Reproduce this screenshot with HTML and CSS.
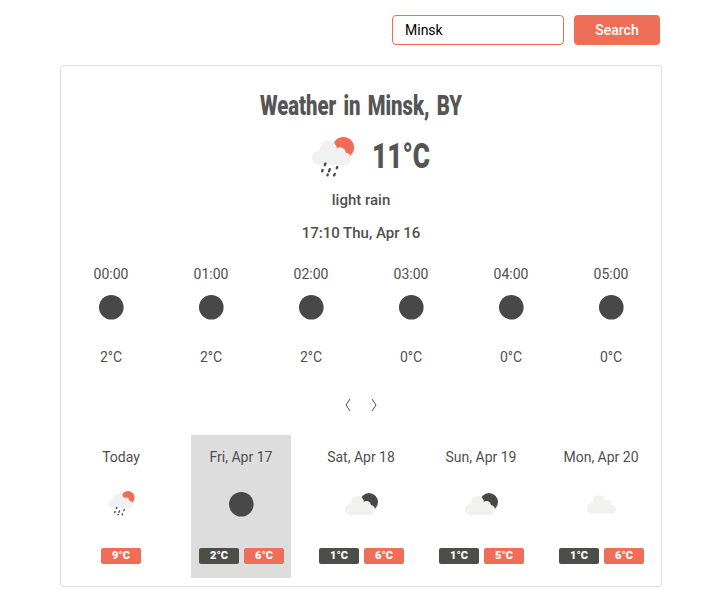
FILE: index.html
```
<!DOCTYPE html>
<html lang="en">
<head>
<meta charset="utf-8">
<title>Weather</title>
<link rel="stylesheet" href="styles.css">
</head>
<body>
<svg class="defs" aria-hidden="true">
  <symbol id="rain" viewBox="0 0 50 50">
    <circle cx="35.4" cy="15.6" r="10.7" fill="#f06d54"/>
    <g fill="#f1f1f1"><circle cx="20.3" cy="17.3" r="8.6"/><circle cx="11" cy="25.7" r="7"/><circle cx="32" cy="21" r="5.8"/><circle cx="37" cy="26.6" r="6.1"/><path d="M11 18h20l6 5v9.7H11z"/></g>
    <path d="M17.4 31.5l-.6 1.6M14.6 38l-.5 1.4M21.8 37.1l-.8 2.2M29.3 35l-.6 1.3M19.8 42.5l-.3.8M26.8 41.9l-.7 1.6" stroke="#484849" stroke-width="2.3" stroke-linecap="round"/>
  </symbol>
  <symbol id="night" viewBox="0 0 40 40"><circle cx="20.3" cy="20.3" r="12.3" fill="#484849"/></symbol>
  <symbol id="cloud-night" viewBox="0 0 40 40">
    <circle cx="28" cy="18.1" r="9" fill="#484849"/>
    <g fill="#f1f1f0"><circle cx="16.5" cy="18.4" r="6.4"/><circle cx="9.5" cy="25.4" r="5.6"/><circle cx="25.5" cy="21.3" r="4.4"/><circle cx="29.2" cy="26" r="5"/><path d="M9.5 20h17l2.7 3v8H9.5z"/></g>
  </symbol>
  <symbol id="cloud" viewBox="0 0 40 40">
    <g fill="#f1f1f0"><circle cx="17.8" cy="17" r="6.1"/><circle cx="10.9" cy="24.2" r="5.2"/><circle cx="26.7" cy="19.7" r="3.9"/><circle cx="30.9" cy="25.2" r="4.2"/><path d="M11 19h16l4 3v7.4H11z"/></g>
  </symbol>
</svg>
<main class="app">
  <form class="search">
    <input class="search-input" type="text" value="Minsk" aria-label="City">
    <button class="search-button" type="button">Search</button>
  </form>
  <section class="card">
    <h1 class="title"><svg width="220" height="36"><text x="9" y="27" textLength="202" lengthAdjust="spacingAndGlyphs">Weather in Minsk, BY</text></svg></h1>
    <div class="current">
      <svg class="current-icon"><use href="#rain"/></svg>
      <svg class="current-temp" width="64" height="46"><text x="-1" y="31" textLength="58" lengthAdjust="spacingAndGlyphs">11°C</text></svg>
    </div>
    <p class="summary">light rain</p>
    <p class="summary">17:10 Thu, Apr 16</p>
    <div class="hours">
      <div class="hour"><span>00:00</span><svg class="icon"><use href="#night"/></svg><span>2°C</span></div>
      <div class="hour"><span>01:00</span><svg class="icon"><use href="#night"/></svg><span>2°C</span></div>
      <div class="hour"><span>02:00</span><svg class="icon"><use href="#night"/></svg><span>2°C</span></div>
      <div class="hour"><span>03:00</span><svg class="icon"><use href="#night"/></svg><span>0°C</span></div>
      <div class="hour"><span>04:00</span><svg class="icon"><use href="#night"/></svg><span>0°C</span></div>
      <div class="hour"><span>05:00</span><svg class="icon"><use href="#night"/></svg><span>0°C</span></div>
    </div>
    <nav class="pager">
      <svg class="arrow" viewBox="0 0 6 14"><path d="M5 1L1 7l4 6"/></svg>
      <svg class="arrow" viewBox="0 0 6 14"><path d="M1 1l4 6-4 6"/></svg>
    </nav>
    <div class="days">
      <div class="day"><span>Today</span><svg class="icon icon-rain"><use href="#rain"/></svg><div class="temps"><b class="temp high">9°C</b></div></div>
      <div class="day selected"><span>Fri, Apr 17</span><svg class="icon"><use href="#night"/></svg><div class="temps"><b class="temp low">2°C</b><b class="temp high">6°C</b></div></div>
      <div class="day"><span>Sat, Apr 18</span><svg class="icon"><use href="#cloud-night"/></svg><div class="temps"><b class="temp low">1°C</b><b class="temp high">6°C</b></div></div>
      <div class="day"><span>Sun, Apr 19</span><svg class="icon"><use href="#cloud-night"/></svg><div class="temps"><b class="temp low">1°C</b><b class="temp high">5°C</b></div></div>
      <div class="day"><span>Mon, Apr 20</span><svg class="icon"><use href="#cloud"/></svg><div class="temps"><b class="temp low">1°C</b><b class="temp high">6°C</b></div></div>
    </div>
  </section>
</main>
</body>
</html>
```
FILE: styles.css
```
* { box-sizing: border-box; }
body {
  margin: 0;
  background: #fff;
  color: #4f4f4f;
  font: 14px/20px Roboto, sans-serif;
}
.defs { display: none; }
svg { display: block; }
.app { width: 602px; margin: 0 0 0 60px; padding-top: 15px; }
.search { display: flex; justify-content: flex-end; gap: 10px; padding-right: 2px; margin: 0 0 20px; }
.search-input {
  width: 172px;
  height: 30px;
  padding: 0 12px;
  border: 1px solid #f06d54;
  border-radius: 4px;
  font: 14px Roboto, sans-serif;
  color: #000;
}
.search-button {
  width: 86px;
  height: 30px;
  padding: 0;
  border: 0;
  border-radius: 4px;
  background: #ef6e58;
  color: #fff;
  font: 500 14px Roboto, sans-serif;
}
.card {
  height: 522px;
  border: 1px solid #ddd;
  border-radius: 3px;
  padding-top: 22px;
}
.title { display: flex; justify-content: center; margin: 0; }
.title svg, .current-temp { overflow: visible; }
.title text { font: 900 27.5px Roboto, sans-serif; fill: #555; word-spacing: 3px; }
.current { display: flex; justify-content: center; gap: 15px; height: 50px; margin-top: 8px; padding-left: 23px; }
.current-icon { width: 50px; height: 50px; }
.current-temp { margin-top: 5px; }
.current-temp text { font: 900 35px Roboto, sans-serif; fill: #555; }
.summary { margin: 8px 0 13px; text-align: center; font-size: 15px; font-weight: 500; }
.summary + .summary { margin-bottom: 0; }
.hours { display: grid; grid-template-columns: repeat(6, 100px); margin-top: 21px; }
.hour, .day { display: flex; flex-direction: column; align-items: center; }
.icon { width: 40px; height: 40px; margin: 3px 0 20px; }
.pager { display: flex; justify-content: center; gap: 20px; margin: 31px 0 23px; }
.arrow { width: 6px; height: 14px; fill: none; stroke: #4f4f4f; stroke-width: 1; }
.days { display: flex; justify-content: space-around; }
.day { width: 100px; height: 143px; padding-top: 12px; }
.day .icon { margin: 17px 0 24px; }
.day .icon-rain { width: 31px; height: 31px; margin: 21px 0 29px; }
.selected { background: #ddd; }
.temps { display: flex; gap: 5px; }
.day:not(:first-child) .temps { margin-left: 1px; }
.temp {
  width: 40px;
  height: 16px;
  border-radius: 2px;
  color: #fff;
  font-size: 11px;
  font-weight: 900;
  line-height: 15px;
  text-align: center;
}
.low { background: #4d4d49; }
.high { background: #ef6e58; }
```
